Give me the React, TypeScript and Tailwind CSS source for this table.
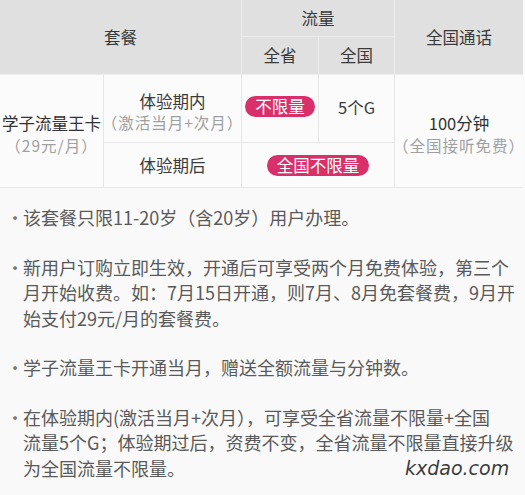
const CJK = "font-['Noto_Sans_CJK_SC','Noto_Sans',sans-serif]";

const NOTES = [
  ["该套餐只限11-20岁（含20岁）用户办理。"],
  [
    "新用户订购立即生效，开通后可享受两个月免费体验，第三个",
    "月开始收费。如：7月15日开通，则7月、8月免套餐费，9月开",
    "始支付29元/月的套餐费。",
  ],
  ["学子流量王卡开通当月，赠送全额流量与分钟数。"],
  [
    "在体验期内(激活当月+次月），可享受全省流量不限量+全国",
    "流量5个G；体验期过后，资费不变，全省流量不限量直接升级",
    "为全国流量不限量。",
  ],
];

function Badge({ text }: { text: string }) {
  return (
    <span className="rounded-full bg-[#d92f6a] px-[10px] text-[16.5px] leading-[21px] text-white">
      {text}
    </span>
  );
}

export default function App() {
  return (
    <div className={`relative h-[495px] w-[525px] overflow-hidden bg-[#f9f9f9] ${CJK}`}>
      {/* Table */}
      <div className="grid w-[523px] grid-cols-[104px_138px_77px_76px_128px] grid-rows-[37px_38px_68px_45px] text-[16.5px] text-[#3a3a3a]">
        {/* header */}
        <div className="col-span-2 row-span-2 flex items-center justify-center border-r border-b border-[#ececec] bg-[#e0e0e0]">
          套餐
        </div>
        <div className="col-span-2 flex items-center justify-center border-r border-b border-[#ececec] bg-[#e0e0e0]">
          流量
        </div>
        <div className="row-span-2 flex items-center justify-center border-b border-[#ececec] bg-[#e0e0e0]">
          全国通话
        </div>
        <div className="flex items-center justify-center border-r border-b border-[#ececec] bg-[#e0e0e0]">
          全省
        </div>
        <div className="flex items-center justify-center border-r border-b border-[#ececec] bg-[#e0e0e0]">
          全国
        </div>

        {/* body */}
        <div className="row-span-2 flex flex-col items-center justify-center gap-[1px] border-r border-b border-[#e6e6e6] bg-[#fbfbfb] pt-[5px]">
          <div className="leading-[22px] text-[#333]">学子流量王卡</div>
          <div className="whitespace-nowrap text-[15.5px] leading-[21px] tracking-[1px] text-[#a0a0a0]">（29元/月）</div>
        </div>
        <div className="flex flex-col items-center justify-center border-r border-b border-[#e6e6e6] bg-[#fbfbfb] pt-[6px]">
          <div className="leading-[21px]">体验期内</div>
          <div className="whitespace-nowrap text-[15.5px] leading-[21px] tracking-[1px] text-[#a0a0a0]">（激活当月+次月）</div>
        </div>
        <div className="flex items-start justify-center border-r border-b border-[#e6e6e6] bg-[#fbfbfb] pt-[21px]">
          <Badge text="不限量" />
        </div>
        <div className="flex items-start justify-center border-r border-b border-[#e6e6e6] bg-[#fbfbfb] pt-[21px] leading-[22px]">
          5个G
        </div>
        <div className="row-span-2 flex flex-col items-center justify-center gap-[1px] border-b border-[#e6e6e6] bg-[#fbfbfb] pt-[7px]">
          <div className="leading-[21px] text-[#333]">100分钟</div>
          <div className="whitespace-nowrap text-[15.5px] leading-[21px] tracking-[1px] text-[#a0a0a0]">（全国接听免费）</div>
        </div>
        <div className="flex items-center justify-center border-r border-b border-[#e6e6e6] bg-[#fbfbfb]">
          体验期后
        </div>
        <div className="col-span-2 flex items-center justify-center border-r border-b border-[#e6e6e6] bg-[#fbfbfb] pt-[1px]">
          <Badge text="全国不限量" />
        </div>
      </div>

      {/* Notes */}
      <ul className="mt-[17px] flex flex-col gap-[24px] text-[18px] leading-[25.5px] text-[#5a5a5a]">
        {NOTES.map((lines) => (
          <li key={lines[0]} className="flex">
            <span className="w-[23px] shrink-0 pl-[6px] text-[#777]">·</span>
            <div className="flex flex-col">
              {lines.map((l) => (
                <span key={l} className="whitespace-nowrap">
                  {l}
                </span>
              ))}
            </div>
          </li>
        ))}
      </ul>

      {/* watermark */}
      <div className="absolute left-[405px] top-[454px] font-['DejaVu_Sans',sans-serif] text-[19px] font-light italic text-[#3c3c3c] [text-shadow:0_0_3px_#fff]">
        kxdao.com
      </div>
    </div>
  );
}
